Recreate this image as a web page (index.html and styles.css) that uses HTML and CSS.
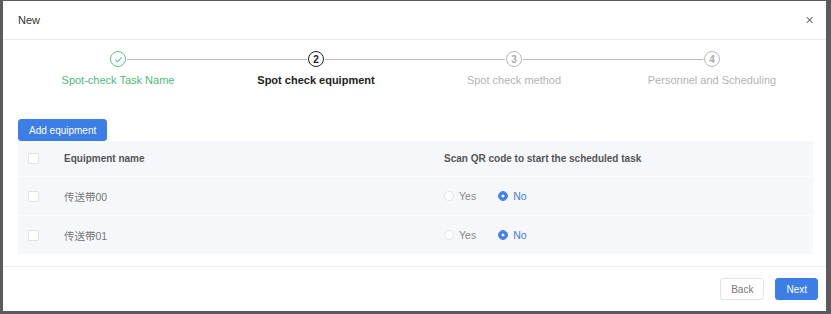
FILE: index.html
```html
<!DOCTYPE html>
<html lang="en">
<head>
  <meta charset="UTF-8" />
  <title>New</title>
  <link rel="stylesheet" href="styles.css">
</head>
<body>
  <div class="modal">
    <div class="modal-head">
      <span class="title">New</span>
      <span class="close">&#x2715;</span>
    </div>

    <div class="steps">
      <div class="step done">
        <div class="dot">
          <svg width="9" height="9" viewBox="0 0 10 10"><path d="M1.5 5.2 L4 7.6 L8.6 2.6" fill="none" stroke="#5cc087" stroke-width="1.2"/></svg>
        </div>
        <div class="label">Spot-check Task Name</div>
      </div>
      <div class="step active">
        <div class="dot">2</div>
        <div class="label">Spot check equipment</div>
      </div>
      <div class="step">
        <div class="dot">3</div>
        <div class="label">Spot check method</div>
      </div>
      <div class="step">
        <div class="dot">4</div>
        <div class="label">Personnel and Scheduling</div>
      </div>
    </div>

    <div class="content">
      <button class="btn primary add">Add equipment</button>
      <div class="table">
        <div class="row head">
          <span class="cell check"><i class="box"></i></span>
          <span class="cell name">Equipment name</span>
          <span class="cell scan">Scan QR code to start the scheduled task</span>
        </div>
        <div class="row">
          <span class="cell check"><i class="box"></i></span>
          <span class="cell name">传送带00</span>
          <span class="cell scan">
            <label class="radio"><i class="ring"></i>Yes</label>
            <label class="radio on"><i class="ring"></i>No</label>
          </span>
        </div>
        <div class="row">
          <span class="cell check"><i class="box"></i></span>
          <span class="cell name">传送带01</span>
          <span class="cell scan">
            <label class="radio"><i class="ring"></i>Yes</label>
            <label class="radio on"><i class="ring"></i>No</label>
          </span>
        </div>
      </div>
    </div>

    <div class="modal-foot">
      <button class="btn">Back</button>
      <button class="btn primary">Next</button>
    </div>
  </div>
</body>
</html>
```

FILE: styles.css
```css
body { margin: 0; background: #5b5b5b; font-family: "Liberation Sans", Arial, "Noto Sans CJK SC", sans-serif; height: 314px; overflow: hidden; }
.modal { background: #fff; margin: 1px 5px 0 3px; height: 310px; display: flex; flex-direction: column; }

.modal-head { height: 38px; display: flex; align-items: center; justify-content: space-between; padding: 0 12px 0 15px; border-bottom: 1px solid #ececec; }
.title { font-size: 11px; color: #333; }
.close { font-size: 11px; color: #777; }

.steps { display: grid; grid-template-columns: repeat(4, 1fr); width: 792px; margin: 11px 0 0 16px; }
.step { position: relative; display: flex; flex-direction: column; align-items: center; }
.step:not(:last-child)::after { content: ""; position: absolute; top: 8px; left: calc(50% + 9px); width: calc(100% - 18px); height: 1px; background: #b9b9b9; }
.dot { width: 14px; height: 14px; border: 1.5px solid #b9b9b9; border-radius: 50%; display: flex; align-items: center; justify-content: center; font-size: 10px; color: #aaa; font-weight: bold; }
.label { margin-top: 7px; font-size: 11px; color: #b3b3b3; }
.done .dot { border-color: #5cc087; }
.done .label { color: #4cbb78; }
.active .dot { border-color: #222; color: #222; }
.active .label { color: #222; font-weight: bold; }

.content { padding: 33px 13px 0 15px; flex: 1; border-bottom: 1px solid #ececec; }
.btn { font-family: inherit; font-size: 10px; height: 22px; padding: 0 10px; border: 1px solid #e3e3e3; background: #fff; color: #777; border-radius: 3px; }
.btn.primary { background: #3c7ee6; border-color: #3c7ee6; color: #fff; }
.add { padding: 0 10px; display: block; }

.table { background: #f6f7fa; }
.row { display: flex; align-items: center; height: 38px; border-bottom: 1px solid #fdfdfe; font-size: 10.5px; color: #777; }
.row.head { height: 35px; font-weight: bold; color: #555; font-size: 10px; }
.cell.check { width: 36px; padding-left: 10px; }
.box { display: block; width: 9px; height: 9px; border: 1px solid #e2e2e2; background: #fff; border-radius: 2px; }
.cell.name { width: 380px; }
.cell.scan { display: flex; align-items: center; }
.radio { display: flex; align-items: center; margin-right: 22px; color: #888; }
.ring { width: 8px; height: 8px; border: 1px solid #e4e4e4; border-radius: 50%; background: #fff; margin: 0 5px 0 0; }
.radio.on { color: #3c7ee6; }
.radio.on .ring { border-color: #3c7ee6; box-shadow: inset 0 0 0 2.5px #3c7ee6; background: #fff; }

.modal-foot { height: 44px; display: flex; justify-content: flex-end; align-items: center; gap: 11px; padding: 0 8px 0 0; }
```
